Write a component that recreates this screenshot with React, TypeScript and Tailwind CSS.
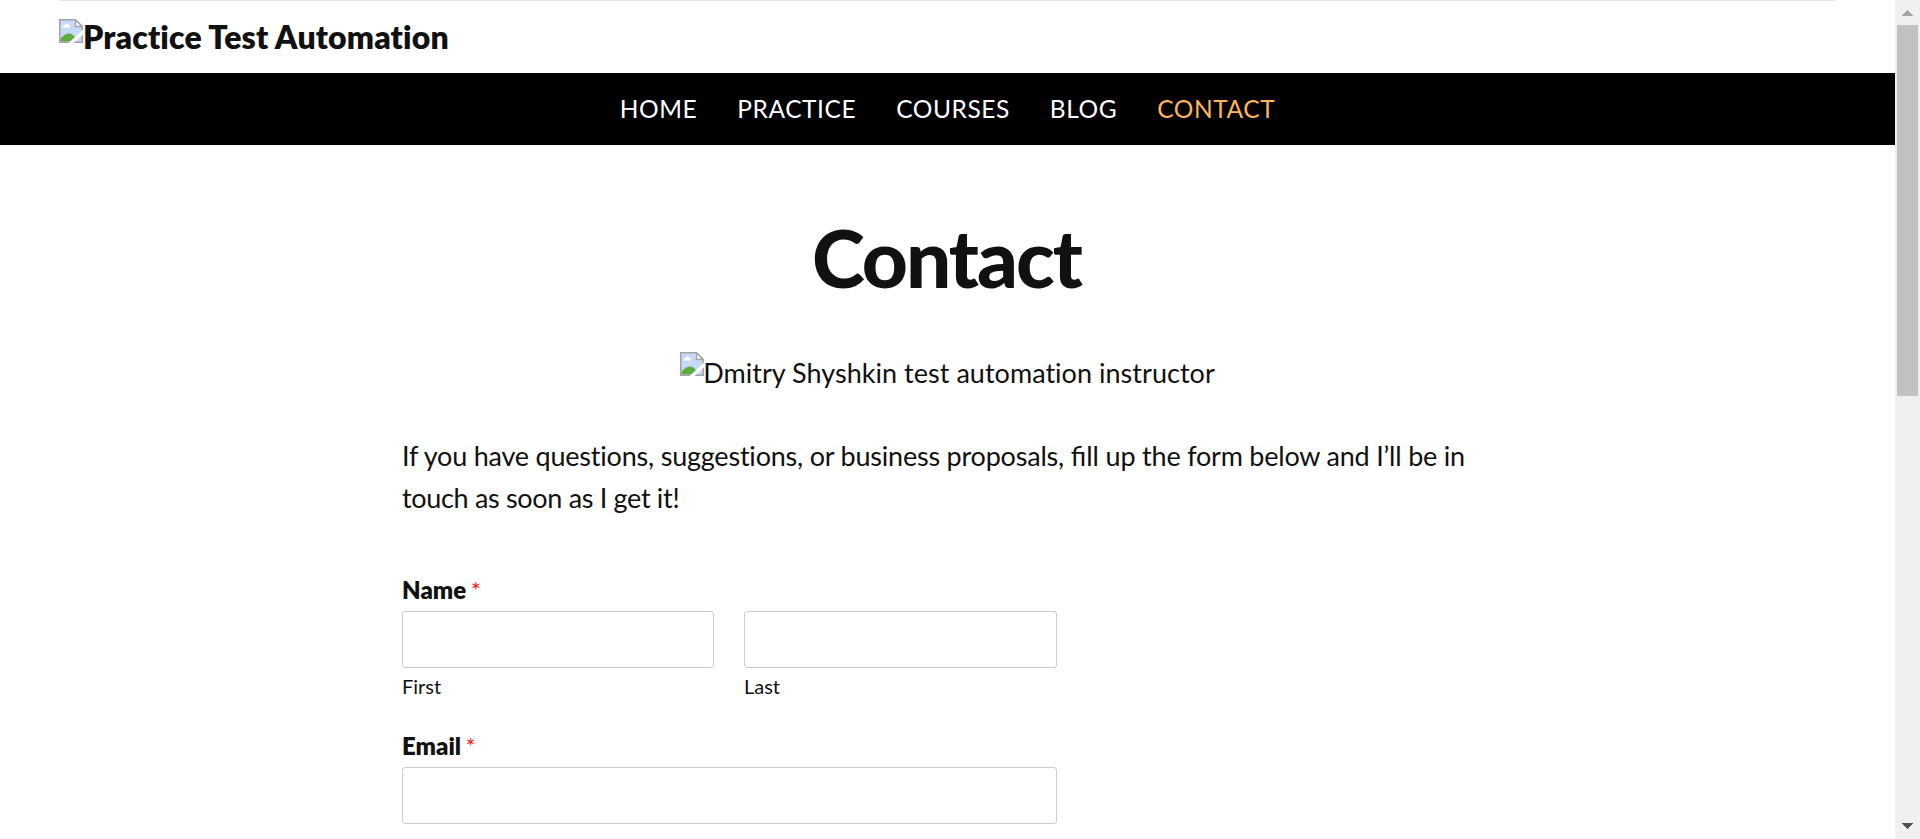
import React from "react";

function BrokenImage({ className = "" }: { className?: string }) {
  return (
    <svg width="24" height="24" viewBox="0 0 24 24" className={`shrink-0 ${className}`}>
      <path d="M1 1H16.5L23 7.5V23H1Z" fill="#c8dafa" />
      <path d="M3.5 8.5C3.5 6.8 5 6.5 5.5 6.5C6 3.8 9 4 9.2 6C10.8 5.8 11.2 7.3 11 8.5Z" fill="#fff" />
      <path d="M1.5 22.5V20C5 15 10 13 14 16L17 19V22.5Z" fill="#5aad3e" />
      <path d="M0.75 0.75H16.5L23.25 7.5V23.25H0.75Z" fill="none" stroke="#a3a3a3" strokeWidth="1.5" />
      <path d="M16.5 1V7.5H23Z" fill="#fff" stroke="#a3a3a3" strokeWidth="1.3" />
      <path d="M24 10.5V15.5L14.5 24H9.5Z" fill="#fff" />
    </svg>
  );
}

const navItems = ["HOME", "PRACTICE", "COURSES", "BLOG", "CONTACT"];

function Field({ id, className = "" }: { id: string; className?: string }) {
  return (
    <input
      id={id}
      type="text"
      className={`block h-[57px] rounded-[3px] border border-[#ccc] bg-white px-3 outline-none ${className}`}
    />
  );
}

function Label({ text, htmlFor }: { text: string; htmlFor: string }) {
  return (
    <label htmlFor={htmlFor} className="block h-[31px] text-[24px] leading-[31px] font-extrabold">
      {text} <span className="-ml-px font-normal text-[#ff1a1a]">*</span>
    </label>
  );
}

function Scrollbar() {
  return (
    <div className="flex h-full w-[25px] flex-col items-center bg-[#f0f0f0]">
      <svg width="25" height="25" viewBox="0 0 25 25" shapeRendering="crispEdges">
        <path d="M7 16L12.5 10L18 16Z" fill="#a3a3a3" />
      </svg>
      <div className="h-[371px] w-[21px] bg-[#c1c1c1]" />
      <div className="grow" />
      <svg width="25" height="25" viewBox="0 0 25 25" shapeRendering="crispEdges">
        <path d="M7 9L12.5 15L18 9Z" fill="#505050" />
      </svg>
    </div>
  );
}

export default function App() {
  return (
    <div className="flex h-[839px] overflow-hidden bg-white font-[Lato,sans-serif] text-[#111] [font-variant-ligatures:none]">
      <div className="w-[1895px]">
        <header className="mx-[59px] flex h-[73px] border-t border-[#e5e5e5] pt-[18px]">
          <BrokenImage />
          <span className="text-[32px] leading-[36px] font-extrabold tracking-[0.14px]">Practice Test Automation</span>
        </header>
        <nav className="flex h-[72px] items-center justify-center gap-[40px] bg-black text-[24.5px] tracking-[0.56px] text-white">
          {navItems.map((item) => (
            <a key={item} className={item === "CONTACT" ? "text-[#ffb55a]" : ""}>{item}</a>
          ))}
        </nav>
        <main className="mx-auto w-[1091px]">
          <h1 className="mt-[64px] pr-[2px] text-center text-[80px] leading-[96px] font-black tracking-[-2px]">Contact</h1>
          <div className="mt-[47px] flex h-[42px] justify-center text-[27px] leading-[42px]">
            <BrokenImage />
            <span className="-ml-px tracking-[0.03px]">Dmitry Shyshkin test automation instructor</span>
          </div>
          <p className="mt-[41px] text-[27px] leading-[42px] tracking-[-0.21px]">
            If you have questions, suggestions, or business proposals,{" "}
            <span className="tracking-normal [font-variant-ligatures:normal]">fill</span> up the form below and I’ll be in{" "}
            <span className="tracking-[-0.32px]">touch as soon as I get it!</span>
          </p>
          <form className="mt-[55px] w-[655px]">
            <Label text="Name" htmlFor="first" />
            <div className="mt-[6px] flex justify-between">
              <div>
                <Field id="first" className="w-[312px]" />
                <label htmlFor="first" className="mt-[4px] block text-[20px] leading-[28px]">First</label>
              </div>
              <div>
                <Field id="last" className="w-[313px]" />
                <label htmlFor="last" className="mt-[4px] block text-[20px] leading-[28px]">Last</label>
              </div>
            </div>
            <div className="mt-[30px]">
              <Label text="Email" htmlFor="email" />
              <Field id="email" className="mt-[6px] w-[655px]" />
            </div>
          </form>
        </main>
      </div>
      <Scrollbar />
    </div>
  );
}
